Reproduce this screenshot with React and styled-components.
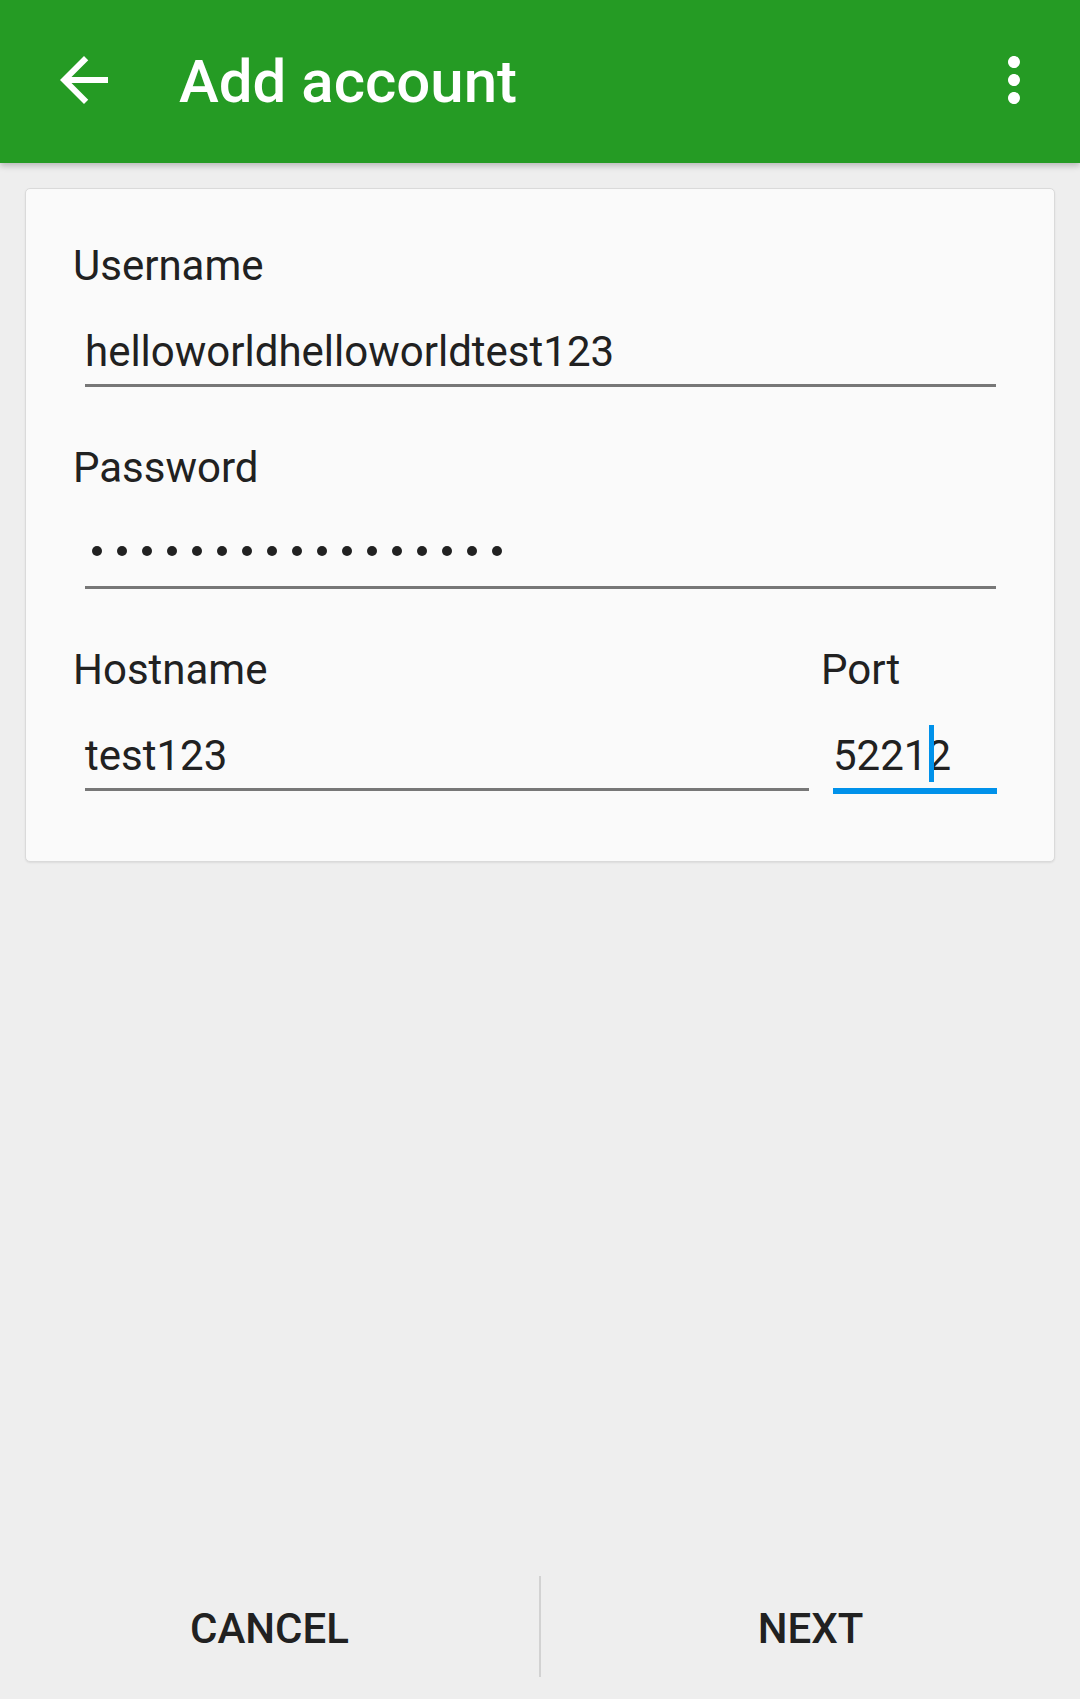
import React from "react";
import styled, { createGlobalStyle } from "styled-components";

const GlobalStyle = createGlobalStyle`
  html, body {
    margin: 0;
    padding: 0;
    background: #eeeeee;
  }
  body {
    font-family: Roboto, "Liberation Sans", Arial, sans-serif;
    color: #212121;
  }
`;

function BackIcon() {
  return (
    <svg width="72" height="72" viewBox="0 0 24 24" fill="#ffffff">
      <path d="M20 11H7.83l5.59-5.59L12 4l-8 8 8 8 1.41-1.41L7.83 13H20v-2z" />
    </svg>
  );
}

function MoreIcon() {
  return (
    <svg width="72" height="72" viewBox="0 0 24 24" fill="#ffffff">
      <path d="M12 8c1.1 0 2-.9 2-2s-.9-2-2-2-2 .9-2 2 .9 2 2 2zm0 2c-1.1 0-2 .9-2 2s.9 2 2 2 2-.9 2-2-.9-2-2-2zm0 6c-1.1 0-2 .9-2 2s.9 2 2 2 2-.9 2-2-.9-2-2-2z" />
    </svg>
  );
}

export default function App() {
  const dots = Array.from({ length: 17 });

  return (
    <>
      <GlobalStyle />
      <Page>
        <Toolbar>
          <IconButton>
            <BackIcon />
          </IconButton>
          <Title>Add account</Title>
          <IconButton>
            <MoreIcon />
          </IconButton>
        </Toolbar>

        <Content>
          <Card>
            <Field>
              <Label>Username</Label>
              <Input>
                <Value>helloworldhelloworldtest123</Value>
              </Input>
            </Field>

            <Field>
              <Label>Password</Label>
              <Input>
                <DotRow>
                  {dots.map((_, i) => (
                    <Dot key={i} />
                  ))}
                </DotRow>
              </Input>
            </Field>

            <Row>
              <Field $grow>
                <Label>Hostname</Label>
                <Input>
                  <Value>test123</Value>
                </Input>
              </Field>
              <Field $width="187px">
                <Label>Port</Label>
                <Input $focused>
                  <Value>
                    5221
                    <Caret />
                    2
                  </Value>
                </Input>
              </Field>
            </Row>
          </Card>
        </Content>

        <ButtonBar>
          <BarButton>CANCEL</BarButton>
          <Divider />
          <BarButton>NEXT</BarButton>
        </ButtonBar>
      </Page>
    </>
  );
}

const Page = styled.div`
  display: flex;
  flex-direction: column;
  min-height: 1699px;
  background: #eeeeee;
`;

const Toolbar = styled.header`
  display: flex;
  align-items: center;
  height: 163px;
  padding: 0 30px 0 48px;
  background: #259b24;
  box-shadow: 0 3px 6px rgba(0, 0, 0, 0.22);
  position: relative;
  z-index: 1;
`;

const IconButton = styled.div`
  display: flex;
  width: 72px;
  height: 72px;
  margin-top: -4px;
`;

const Title = styled.h1`
  flex: 1;
  margin: 0 0 0 59px;
  font-size: 60px;
  font-weight: 500;
  color: #ffffff;
  line-height: 1;
`;

const Content = styled.main`
  flex: 1;
  padding: 25px;
`;

const Card = styled.section`
  background: #fafafa;
  border: 1px solid #dadada;
  border-radius: 5px;
  box-shadow: 0 1px 2px rgba(0, 0, 0, 0.08);
  padding: 53px 46px 70px 47px;
  display: flex;
  flex-direction: column;
  gap: 57px;
`;

const Row = styled.div`
  display: flex;
  align-items: flex-start;
`;

const Field = styled.div`
  display: flex;
  flex-direction: column;
  flex: ${(p) => (p.$grow ? 1 : "none")};
  width: ${(p) => p.$width || "auto"};
`;

const Label = styled.label`
  font-size: 42px;
  line-height: 47px;
  color: #212121;
`;

const Input = styled.div`
  margin: 0 12px;
  padding: 38px 0 8px;
  border-bottom: ${(p) => (p.$focused ? "6px solid #0091ea" : "3px solid #777777")};
  margin-bottom: ${(p) => (p.$focused ? "-3px" : "0")};
  margin-right: ${(p) => (p.$focused ? "11px" : "12px")};
`;

const Value = styled.div`
  font-size: 42px;
  line-height: 49px;
  color: #212121;
  white-space: nowrap;
`;

/* text cursor drawn over the digits, kept out of the line box */
const Caret = styled.span`
  position: relative;
  display: inline-block;
  width: 0;
  height: 0;

  &::after {
    content: "";
    position: absolute;
    left: 2px;
    bottom: -12px;
    width: 5px;
    height: 57px;
    background: #0091ea;
  }
`;

const DotRow = styled.div`
  display: flex;
  gap: 15px;
  height: 49px;
  padding: 17px 0 0 7px;
  box-sizing: border-box;
`;

const Dot = styled.span`
  width: 10px;
  height: 10px;
  border-radius: 50%;
  background: #212121;
`;

const ButtonBar = styled.footer`
  display: flex;
  height: 142px;
`;

const BarButton = styled.button`
  flex: 1;
  border: none;
  background: transparent;
  font-family: Roboto, "Liberation Sans", Arial, sans-serif;
  font-size: 42px;
  font-weight: 500;
  color: #212121;
  padding: 0;
`;

const Divider = styled.div`
  width: 2px;
  margin: 19px 0 22px;
  background: #d2d2d2;
`;
